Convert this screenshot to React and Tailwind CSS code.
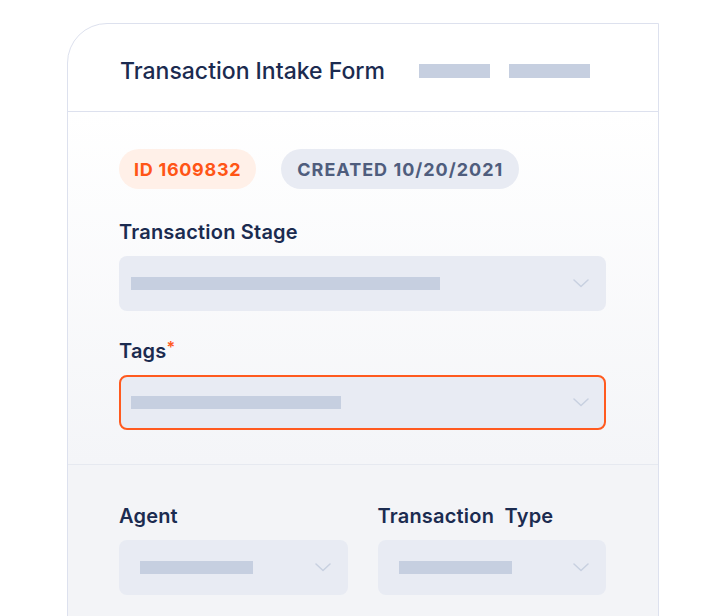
import React from 'react'

function Chevron() {
  return (
    <svg width="16" height="9" viewBox="0 0 16 9" fill="none">
      <polyline points="1,1 8,7.5 15,1" stroke="#c8d0e0" strokeWidth="1.5" strokeLinecap="round" strokeLinejoin="round" />
    </svg>
  )
}

function Select({ bar, active, small }) {
  let pad = small ? 'pl-[21px] pr-[17px]' : 'pl-[12px] pr-[17px]'
  if (active) pad = 'border-2 border-[#ff5a1f] pl-[10px] pr-[15px]'
  return (
    <div className={`h-[55px] rounded-[8px] bg-[#e8ebf3] flex items-center justify-between ${pad}`}>
      <div className={`h-[13px] bg-[#c6cfe0] ${bar}`}></div>
      <Chevron />
    </div>
  )
}

function Label({ children, required }) {
  return (
    <div className="text-[20px] leading-[24px] font-semibold text-[#1b2b50] tracking-[0.2px]">
      {children}
      {required && <span className="text-[#ff5a1f] align-top text-[16px] leading-[16px]">*</span>}
    </div>
  )
}

export default function App() {
  return (
    <div className="h-[616px] w-[724px] overflow-hidden bg-white pt-[23px] pl-[67px]" style={{ fontFamily: 'Inter, "Open Sans", sans-serif' }}>
      <div className="w-[592px] h-[620px] border border-[#dde1ee] rounded-tl-[40px] overflow-hidden flex flex-col bg-white">
        <div className="h-[88px] border-b border-[#dde1ee] flex items-center pl-[52px] pt-[7px]">
          <h1 className="text-[23px] font-medium text-[#1b2b50]">Transaction Intake Form</h1>
          <div className="ml-[34px] w-[71px] h-[14px] bg-[#c6cfe0]"></div>
          <div className="ml-[19px] w-[81px] h-[14px] bg-[#c6cfe0]"></div>
        </div>
        <div className="bg-gradient-to-b from-white to-[#f4f5f8] pl-[51px] pr-[52px] pt-[37px] pb-[34px] border-b border-[#e6e9f0]">
          <div className="flex gap-[25px]">
            <span className="h-[40px] px-[15px] rounded-full bg-[#fff0e8] text-[#ff5516] text-[18px] font-bold tracking-[0.7px] flex items-center">ID 1609832</span>
            <span className="h-[40px] px-[16px] rounded-full bg-[#e8ebf3] text-[#4f5d7d] text-[18px] font-bold tracking-[1px] flex items-center">CREATED 10/20/2021</span>
          </div>
          <div className="mt-[31px]">
            <Label>Transaction Stage</Label>
            <div className="mt-[12px]">
              <Select bar="w-[309px]" />
            </div>
          </div>
          <div className="mt-[28px]">
            <Label required>Tags</Label>
            <div className="mt-[12px]">
              <Select bar="w-[210px]" active />
            </div>
          </div>
        </div>
        <div className="flex-1 bg-[#f3f4f7] pl-[51px] pr-[52px] pt-[39px]">
          <div className="grid grid-cols-2 gap-[30px]">
            <div>
              <Label>Agent</Label>
              <div className="mt-[12px]">
                <Select bar="w-[113px]" small />
              </div>
            </div>
            <div>
              <Label>Transaction&nbsp; Type</Label>
              <div className="mt-[12px]">
                <Select bar="w-[113px]" small />
              </div>
            </div>
          </div>
        </div>
      </div>
    </div>
  )
}
